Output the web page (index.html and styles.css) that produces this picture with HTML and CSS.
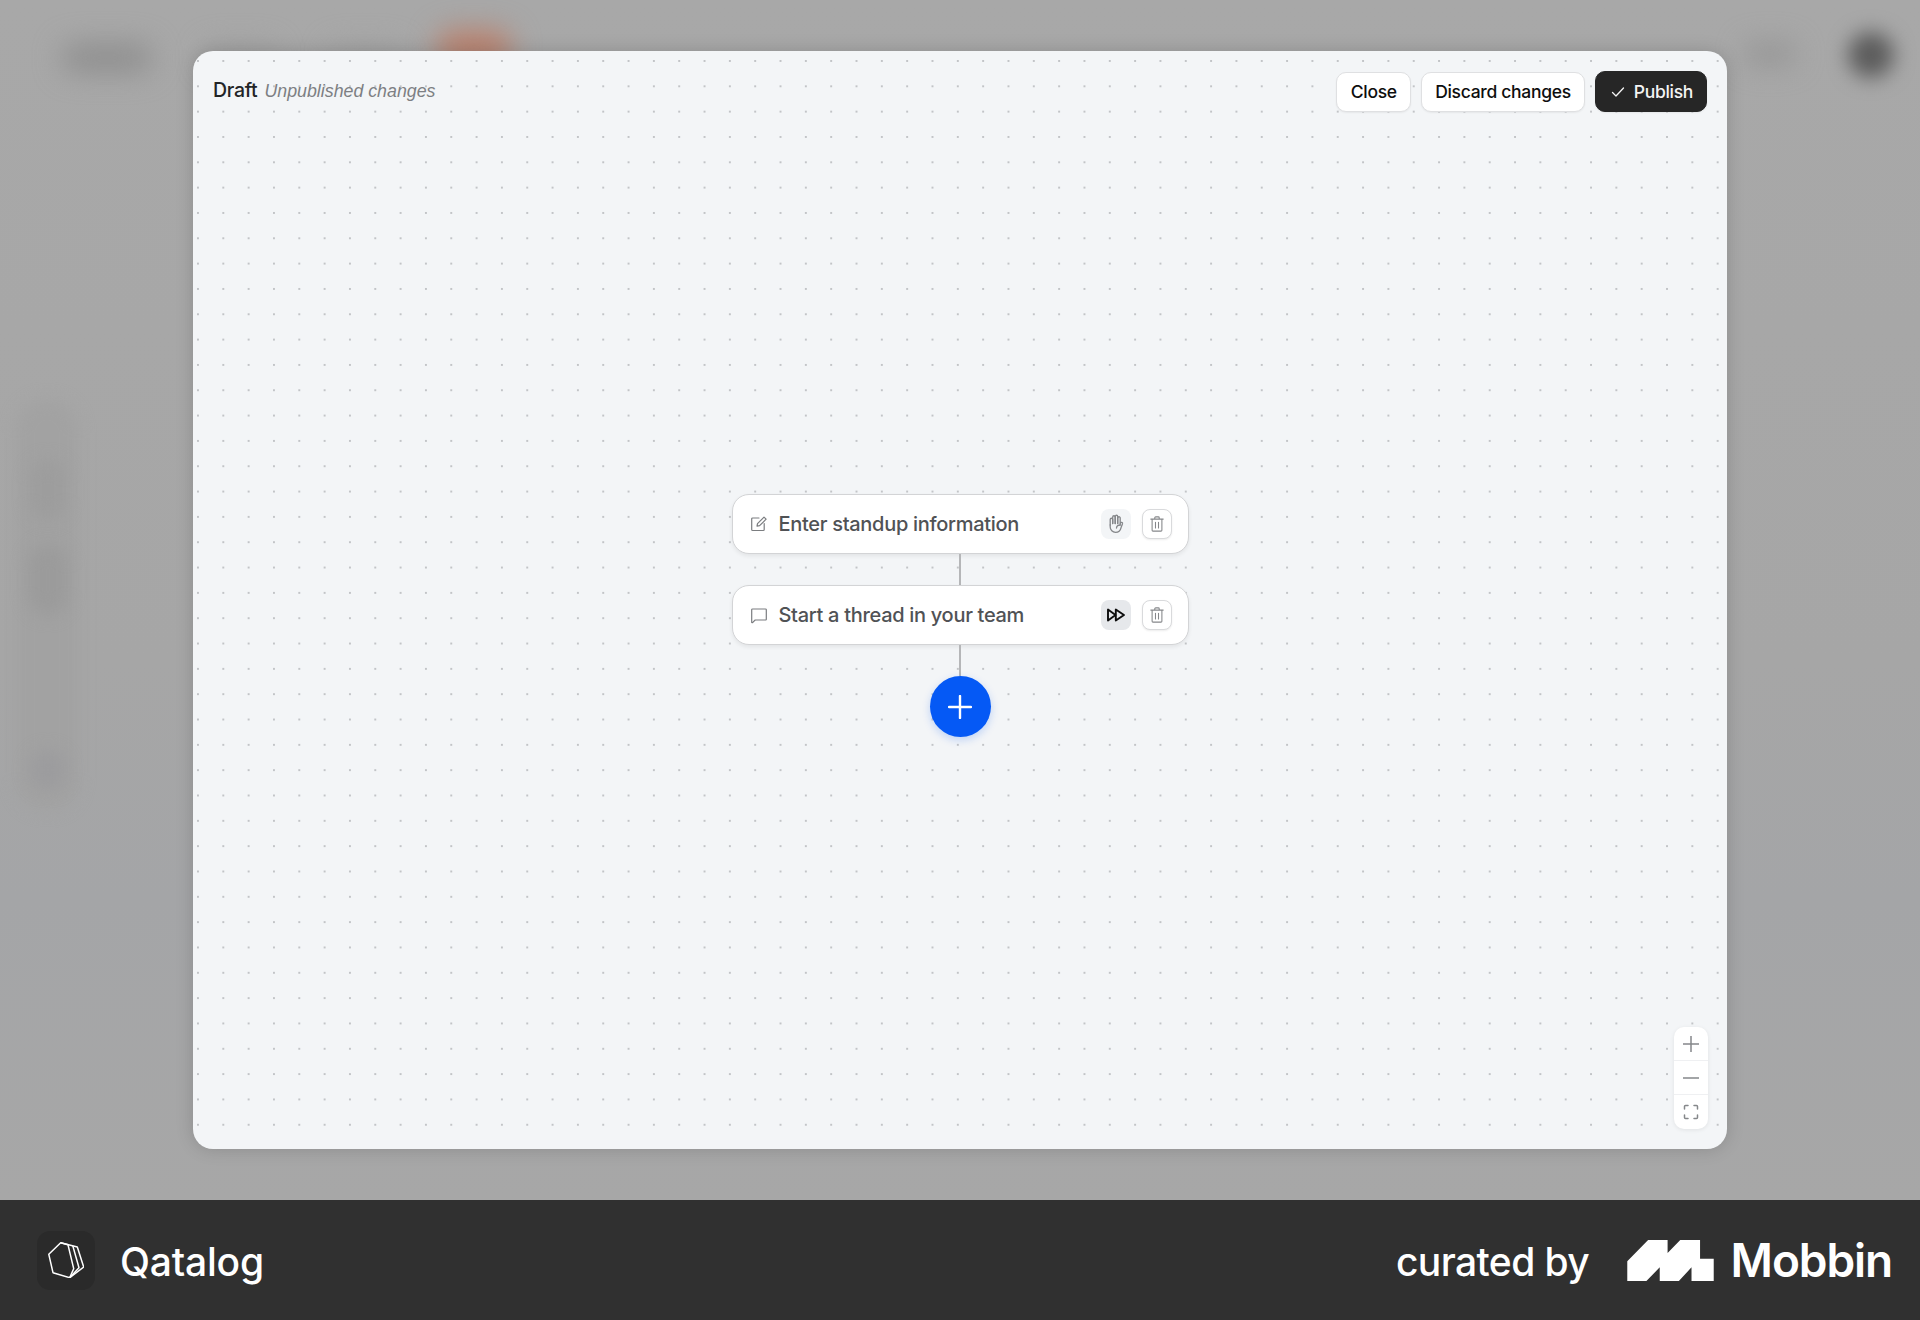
FILE: index.html
```html
<!DOCTYPE html>
<html lang="en">
<head>
<meta charset="utf-8">
<title>Qatalog workflow draft</title>
<link rel="stylesheet" href="styles.css">
</head>
<body>
<main class="backdrop">
  <div class="blob blob-logo"></div>
  <div class="blob blob-nav1"></div>
  <div class="blob blob-nav2"></div>
  <div class="blob blob-orange"></div>
  <div class="blob blob-action"></div>
  <div class="blob blob-avatar"></div>
  <div class="blob blob-rail"></div>
  <div class="blob blob-side1"></div>
  <div class="blob blob-side2"></div>
  <div class="blob blob-side3"></div>
  <section class="modal">
    <header class="modal-head">
      <div class="status"><span class="status-title">Draft</span><span class="status-note">Unpublished changes</span></div>
      <div class="actions">
        <button class="btn">Close</button>
        <button class="btn">Discard changes</button>
        <button class="btn btn-dark">
          <svg class="btn-check" viewBox="0 0 16 16" fill="none" stroke="currentColor" stroke-width="1.3" stroke-linecap="round" stroke-linejoin="round"><path d="M2.5 8.5l3.5 3.5 7.5-8"/></svg>
          Publish
        </button>
      </div>
    </header>
    <div class="flow">
      <div class="node">
        <svg class="node-icon" viewBox="0 0 18 18" fill="none" stroke="currentColor" stroke-width="1.2" stroke-linecap="round" stroke-linejoin="round"><path d="M9 3H2.6a.9.9 0 0 0-.9.9v10.700c0 .5.4.9.9.9h10.700c.5 0 .9-.4.9-.9V8.500"/><path d="M7 11.200l.5-2.600L14 2.100l2.100 2.100-6.500 6.500z"/></svg>
        <span class="node-label">Enter standup information</span>
        <span class="tool tool-soft">
          <svg class="tool-hand" viewBox="0 0 16 20" fill="none" stroke="#85878a" stroke-width="1.3" stroke-linecap="round" stroke-linejoin="round"><path d="M2.200 11V5.500a1.250 1.250 0 0 1 2.500 0v4"/><path d="M4.700 9.500V3a1.250 1.250 0 0 1 2.500 0v6.500"/><path d="M7.200 9.500v-7a1.250 1.250 0 0 1 2.500 0v7"/><path d="M9.700 9.500V4a1.250 1.250 0 0 1 2.500 0v7"/><path d="M2.200 11v2c0 3 2.500 5.300 5.300 5.300s5-2.200 5.500-4.500l1.500-4c.4-1.300-1.600-2-2.200-.6"/><path d="M12.200 11c-2 0-3.500 1-3.700 3"/></svg>
        </span>
        <span class="tool tool-line">
          <svg class="tool-icon" viewBox="0 0 18 20" fill="none" stroke="#85878a" stroke-width="1.2" stroke-linecap="round" stroke-linejoin="round"><path d="M2 4.500h14M6.500 4.500V3a1 1 0 0 1 1-1h3a1 1 0 0 1 1 1v1.500M3.500 4.500v12.500a1 1 0 0 0 1 1h9a1 1 0 0 0 1-1V4.500M7.300 8v6.500M10.700 8v6.500"/></svg>
        </span>
      </div>
      <div class="link"></div>
      <div class="node">
        <svg class="node-icon" viewBox="0 0 18 18" fill="none" stroke="currentColor" stroke-width="1.2" stroke-linecap="round" stroke-linejoin="round"><path d="M2.500 3h13a.8.8 0 0 1 .8.8v9.400a.8.8 0 0 1-.8.8H5.200l-2.200 2.200a.4.4 0 0 1-1.300-.3V3.800a.8.8 0 0 1 .8-.8z"/></svg>
        <span class="node-label">Start a thread in your team</span>
        <span class="tool tool-grey">
          <svg class="tool-ff" viewBox="0 0 20 16" fill="none" stroke="#0d0d0d" stroke-width="1.9" stroke-linejoin="round"><path d="M2 2.500v11L9.500 8z"/><path d="M9.800 2.500v11L18 8z"/></svg>
        </span>
        <span class="tool tool-line">
          <svg class="tool-icon" viewBox="0 0 18 20" fill="none" stroke="#85878a" stroke-width="1.2" stroke-linecap="round" stroke-linejoin="round"><path d="M2 4.500h14M6.500 4.500V3a1 1 0 0 1 1-1h3a1 1 0 0 1 1 1v1.500M3.500 4.500v12.500a1 1 0 0 0 1 1h9a1 1 0 0 0 1-1V4.500M7.300 8v6.500M10.700 8v6.500"/></svg>
        </span>
      </div>
      <div class="link link-last"></div>
      <button class="add" aria-label="Add step">
        <svg class="add-icon" viewBox="0 0 24 24" fill="none" stroke="#fff" stroke-width="2.4" stroke-linecap="round"><path d="M12 1v22M1 12h22"/></svg>
      </button>
    </div>
    <div class="zoom">
      <span class="zoom-cell"><svg class="zoom-icon" viewBox="0 0 16 16" fill="none" stroke="#85878a" stroke-width="1.5"><path d="M8 0v16M0 8h16"/></svg></span>
      <span class="zoom-cell"><svg class="zoom-icon" viewBox="0 0 16 16" fill="none" stroke="#85878a" stroke-width="1.5"><path d="M0 8h16"/></svg></span>
      <span class="zoom-cell"><svg class="zoom-icon" viewBox="0 0 16 16" fill="none" stroke="#85878a" stroke-width="1.5" stroke-linecap="round"><path d="M1.500 5V2.500a1 1 0 0 1 1-1H5M11 1.500h2.500a1 1 0 0 1 1 1V5M14.500 11v2.500a1 1 0 0 1-1 1H11M5 14.500H2.500a1 1 0 0 1-1-1V11"/></svg></span>
    </div>
  </section>
</main>
<footer class="footer">
  <div class="brand">
    <span class="brand-tile">
      <svg class="brand-logo" viewBox="0 0 36 36" fill="none" stroke="#fff" stroke-width="1.5" stroke-linejoin="round"><path d="M12.700.8L.8 12.300 5 30.700l16.700 5 4-9L20 2.800z"/><path d="M12.700.8l16.600 4.200 6.400 20-14 10.700"/><path d="M24.800 3.900l6.200 21.800-9.300 10"/></svg>
    </span>
    <span class="brand-name">Qatalog</span>
  </div>
  <div class="credit">
    <span class="credit-text">curated by</span>
    <svg class="mobbin-mark" viewBox="0 0 253 120" fill="#fff"><path d="M0 120V62L61 0h57v38L155 0h58v55h40v65h-65V80l-37 40H95V80l-39 40z"/></svg>
    <span class="mobbin-name">Mobbin</span>
  </div>
</footer>
</body>
</html>
```
FILE: styles.css
```css
* { box-sizing: border-box; }
html, body { margin: 0; padding: 0; }
body {
  width: 1920px;
  height: 1320px;
  display: flex;
  flex-direction: column;
  overflow: hidden;
  font-family: Inter, "Liberation Sans", sans-serif;
  background: #a7a7a7;
}
.backdrop {
  position: relative;
  flex: 0 0 1200px;
  display: flex;
  align-items: center;
  justify-content: center;
  overflow: hidden;
  background: linear-gradient(180deg, #a8a8a8 0%, #a6a6a6 55%, #a4a5a7 75%, #a7a7a7 100%);
}
.blob { position: absolute; filter: blur(14px); border-radius: 30px; }
.blob-logo { left: 62px; top: 44px; width: 90px; height: 28px; background: #8e8e8e; }
.blob-nav1 { left: 205px; top: 46px; width: 70px; height: 20px; background: #9e9e9e; }
.blob-nav2 { left: 330px; top: 46px; width: 70px; height: 20px; background: #a0a0a0; }
.blob-orange { left: 436px; top: 30px; width: 76px; height: 36px; background: #b9806c; }
.blob-action { left: 1745px; top: 44px; width: 50px; height: 20px; background: #939393; }
.blob-avatar { left: 1848px; top: 32px; width: 46px; height: 46px; border-radius: 50%; background: #5c5c5c; filter: blur(10px); }
.blob-rail { left: 16px; top: 400px; width: 62px; height: 410px; background: #a2a2a2; filter: blur(8px); }
.blob-side1 { left: 30px; top: 460px; width: 36px; height: 60px; background: #9d9d9d; filter: blur(8px); }
.blob-side2 { left: 28px; top: 545px; width: 40px; height: 70px; background: #9b9b9b; filter: blur(8px); }
.blob-side3 { left: 30px; top: 750px; width: 36px; height: 40px; background: #9c9c9e; filter: blur(8px); }

.modal {
  position: relative;
  z-index: 1;
  width: 1534px;
  height: 1098px;
  border-radius: 20px;
  background-color: #f3f5f7;
  background-image: radial-gradient(circle, #c2c4c7 0, #c2c4c7 .8px, transparent 1.2px);
  background-size: 25.33px 25.33px;
  background-position: -7.7px -2.7px;
  box-shadow: 0 0 18px rgba(0, 0, 0, .16);
  display: flex;
  flex-direction: column;
}
.modal-head {
  display: flex;
  justify-content: space-between;
  align-items: flex-start;
  padding: 20px 20px 0 20px;
}
.status { display: flex; align-items: baseline; gap: 7px; padding-top: 7px; }
.status-title { font-size: 19.5px; font-weight: 550; letter-spacing: -.3px; color: #222426; }
.status-note {
  font-family: "Liberation Sans", sans-serif;
  font-style: italic;
  font-size: 17.8px;
  color: #7d7f83;
}
.actions { display: flex; align-items: center; gap: 9.5px; }
.btn {
  height: 40px;
  padding: 0 13.4px;
  display: flex;
  align-items: center;
  font: 550 17.5px Inter, "Liberation Sans", sans-serif;
  letter-spacing: -.3px;
  color: #0e0e0e;
  background: #fff;
  border: 1px solid #dfe0e2;
  border-radius: 10px;
  box-shadow: 0 1px 2px rgba(0, 0, 0, .06);
}
.btn-dark {
  height: 41px;
  padding: 0 13px 0 14px;
  gap: 8px;
  color: #f4f4f4;
  background: #262626;
  border-color: #262626;
}
.btn-check { width: 16px; height: 16px; }

.flow {
  position: absolute;
  left: 538.5px;
  top: 442.5px;
  width: 457px;
  display: flex;
  flex-direction: column;
  align-items: center;
}
.node {
  width: 100%;
  height: 60px;
  display: flex;
  align-items: center;
  padding: 0 15.5px 0 17px;
  background: #fff;
  border: 1px solid #d3d4d6;
  border-radius: 17px;
  box-shadow: 0 2px 4px rgba(0, 0, 0, .07);
}
.node-icon { width: 18px; height: 18px; color: #7b7d80; flex: none; }
.node-label {
  flex: 1;
  margin-left: 11px;
  font-size: 20px;
  font-weight: 550;
  letter-spacing: -.3px;
  color: #505255;
}
.tool {
  width: 30px;
  height: 30px;
  display: flex;
  align-items: center;
  justify-content: center;
  border-radius: 8px;
  flex: none;
}
.tool-soft { background: #f3f5f7; margin-right: 11.5px; }
.tool-grey { background: #e6e8eb; margin-right: 11.5px; }
.tool-line { background: #fff; border: 1px solid #d9dadc; box-shadow: 0 1px 2px rgba(0, 0, 0, .08); }
.tool-icon { width: 16px; height: 18px; }
.tool-hand { width: 16px; height: 20px; }
.tool-ff { width: 20px; height: 16px; }
.link { width: 2px; height: 31px; background: #b5b6b8; }
.link-last { height: 31.5px; }
.add {
  width: 61px;
  height: 61px;
  padding: 0;
  display: flex;
  align-items: center;
  justify-content: center;
  border: 0;
  border-radius: 50%;
  background: #0559f5;
  box-shadow: 0 3px 8px rgba(5, 89, 245, .22);
}
.add-icon { width: 24px; height: 24px; }

.zoom {
  position: absolute;
  right: 19px;
  bottom: 20px;
  width: 34px;
  background: #fff;
  border-radius: 10px;
  box-shadow: 0 1px 4px rgba(0, 0, 0, .08);
  display: flex;
  flex-direction: column;
}
.zoom-cell {
  height: 34px;
  display: flex;
  align-items: center;
  justify-content: center;
  border-bottom: 1px solid #eff0f2;
}
.zoom-cell:last-child { border-bottom: 0; }
.zoom-icon { width: 16px; height: 16px; }

.footer {
  flex: 0 0 120px;
  display: flex;
  align-items: center;
  justify-content: space-between;
  padding: 0 28px 0 37px;
  background: #303030;
  color: #fff;
}
.brand { display: flex; align-items: center; gap: 25px; }
.brand-tile {
  width: 58px;
  height: 59px;
  display: flex;
  align-items: center;
  justify-content: center;
  border-radius: 13px;
  background: #2a2a2a;
}
.brand-logo { width: 36px; height: 36px; }
.brand-name { font-size: 39px; font-weight: 550; letter-spacing: -.2px; padding-top: 2px; }
.credit { display: flex; align-items: center; }
.credit-text { font-size: 39px; font-weight: 450; letter-spacing: -.6px; margin-right: 38px; padding-top: 2px; }
.mobbin-mark { width: 87px; height: 41px; margin-right: 16.5px; }
.mobbin-name { font-size: 46px; font-weight: 600; letter-spacing: -1.1px; }
```
